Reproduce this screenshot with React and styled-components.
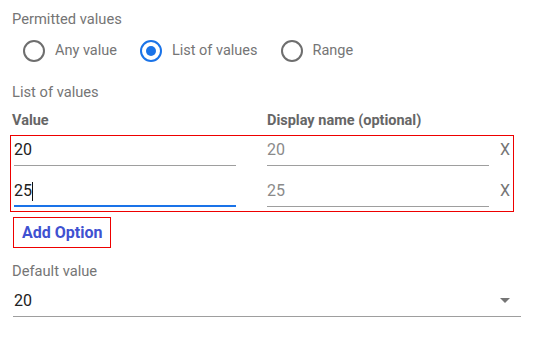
import React from 'react';
import styled, { createGlobalStyle } from 'styled-components';

const GlobalStyle = createGlobalStyle`
    body {
        margin: 0;
        background: #fff;
        font-family: Roboto, "Noto Sans", sans-serif;
    }
`;

const options = [
    { value: '20', display: '20' },
    { value: '25', display: '25', focused: true },
];

function App() {
    return (
        <>
            <GlobalStyle />
            <Page>
                <Label>Permitted values</Label>
                <RadioGroup>
                    <RadioItem>
                        <RadioCircle />
                        <RadioText>Any value</RadioText>
                    </RadioItem>
                    <RadioItem>
                        <RadioCircle checked />
                        <RadioText>List of values</RadioText>
                    </RadioItem>
                    <RadioItem>
                        <RadioCircle />
                        <RadioText>Range</RadioText>
                    </RadioItem>
                </RadioGroup>
                <Label top={20}>List of values</Label>
                <HeaderRow>
                    <HeaderCell>Value</HeaderCell>
                    <HeaderCell>Display name (optional)</HeaderCell>
                </HeaderRow>
                <OptionsBox>
                    {options.map((opt) => (
                        <OptionRow key={opt.value}>
                            <Field focused={opt.focused}>
                                {opt.value}
                                {opt.focused && <Caret />}
                            </Field>
                            <Field muted>{opt.display}</Field>
                            <Remove>X</Remove>
                        </OptionRow>
                    ))}
                </OptionsBox>
                <AddButton>Add Option</AddButton>
                <Label top={13}>Default value</Label>
                <Select>
                    <span>20</span>
                    <Arrow />
                </Select>
            </Page>
        </>
    );
}

const Page = styled.div`
    padding: 9px 0 0 12px;
    width: 510px;
`;
const Label = styled.div`
    font-size: 14.7px;
    line-height: 20px;
    color: #757575;
    margin-top: ${(p) => p.top || 0}px;
`;
const RadioGroup = styled.div`
    display: flex;
    align-items: center;
    gap: 23px;
    padding: 0 0 0 11px;
    margin-top: 11px;
    height: 22px;
`;
const RadioItem = styled.label`
    display: flex;
    align-items: center;
    gap: 10px;
`;
const RadioCircle = styled.span`
    box-sizing: border-box;
    width: 22px;
    height: 22px;
    border-radius: 50%;
    border: 2px solid ${(p) => (p.checked ? '#1a73e8' : '#6e6e6e')};
    display: flex;
    align-items: center;
    justify-content: center;
    &::after {
        content: '';
        display: ${(p) => (p.checked ? 'block' : 'none')};
        width: 10px;
        height: 10px;
        border-radius: 50%;
        background: #1a73e8;
    }
`;
const RadioText = styled.span`
    font-size: 14.5px;
    color: #757575;
    line-height: 20px;
`;
const HeaderRow = styled.div`
    display: grid;
    grid-template-columns: 255px 1fr;
    margin-top: 9px;
`;
const HeaderCell = styled.div`
    font-size: 14.5px;
    font-weight: 700;
    line-height: 20px;
    color: #666;
`;
const OptionsBox = styled.div`
    box-sizing: border-box;
    width: 504px;
    margin: 4px 0 0 -2px;
    border: 1px solid #e00;
    padding: 0 3px 4px 3px;
    display: flex;
    flex-direction: column;
    gap: 11px;
`;
const OptionRow = styled.div`
    display: flex;
    align-items: flex-start;
`;
const Field = styled.div`
    box-sizing: border-box;
    width: 222px;
    height: 30px;
    margin-left: ${(p) => (p.muted ? '31px' : '0')};
    padding: 4px 0 0;
    font-size: 16px;
    line-height: 20px;
    color: ${(p) => (p.muted ? '#8a8a8a' : '#212121')};
    border-bottom: ${(p) => (p.focused ? '2px solid #1a73e8' : '1px solid #9e9e9e')};
    display: flex;
    align-items: flex-start;
`;
const Caret = styled.span`
    display: inline-block;
    width: 1px;
    height: 19px;
    margin-top: 1px;
    background: #111;
`;
const Remove = styled.div`
    margin-left: 11px;
    font-size: 16px;
    line-height: 20px;
    padding-top: 4px;
    color: #757575;
`;
const AddButton = styled.button`
    display: block;
    box-sizing: border-box;
    margin: 5px 0 0 1px;
    width: 98px;
    height: 31px;
    padding: 0 0 0 8px;
    text-align: left;
    background: #fff;
    border: 1px solid #e00;
    font-family: Roboto, sans-serif;
    font-size: 16px;
    font-weight: 700;
    color: #3f51d1;
`;
const Select = styled.div`
    box-sizing: border-box;
    display: flex;
    align-items: center;
    justify-content: space-between;
    width: 508px;
    height: 35px;
    margin: 1px 0 0 1px;
    padding: 3px 11px 0 1px;
    border-bottom: 1px solid #9e9e9e;
    font-size: 16px;
    color: #212121;
`;
const Arrow = styled.span`
    width: 0;
    height: 0;
    border-left: 5px solid transparent;
    border-right: 5px solid transparent;
    border-top: 5px solid #757575;
`;

export default App;
